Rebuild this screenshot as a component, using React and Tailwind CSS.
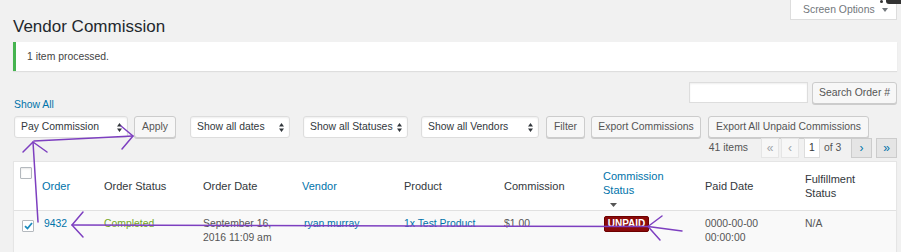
import React from "react";

function SelectArrows() {
    return (
        <svg width="5" height="9" viewBox="0 0 5 9" className="shrink-0">
            <path d="M2.5 0L5 3.5H0z M2.5 9L0 5.5H5z" fill="#32373c" />
        </svg>
    );
}

function Select({label, w}) {
    return (
        <div className={`${w} flex h-[22px] items-center justify-between rounded-[3px] border border-[#ddd] bg-white pl-[6px] pr-[5px] text-[#32373c] shadow-[inset_0_1px_2px_rgba(0,0,0,0.07)]`}>
            <span>{label}</span>
            <SelectArrows />
        </div>
    );
}

function Button({children, w}) {
    return (
        <div className={`${w} flex h-[22px] items-center justify-center rounded-[3px] border border-[#ccc] bg-[#f7f7f7] text-[#555] shadow-[0_1px_0_#ccc]`}>
            {children}
        </div>
    );
}

function PageBtn({children, active}) {
    return (
        <div
            className={
                active
                    ? "flex h-[20px] w-[21px] shrink-0 items-center justify-center border border-[#ccc] bg-[#e5e5e5] text-[12px] text-[#0073aa]"
                    : "flex h-[20px] w-[18px] shrink-0 items-center justify-center border border-[#e5e5e5] bg-[#f7f7f7] text-[12px] text-[#a0a5aa]"
            }
        >
            {children}
        </div>
    );
}

function Annotations() {
    const stroke = "#7d3fc0";
    return (
        <svg className="pointer-events-none absolute inset-0" width="901" height="252" viewBox="0 0 901 252">
            <g fill="none" stroke={stroke} strokeWidth="1.5" strokeLinecap="round" strokeLinejoin="round">
                <path d="M38 222 L33 142" />
                <path d="M23 152 L33 142 L47 152" />
                <path d="M34 141 L133 136" />
                <path d="M121 126 L133 136 L122 149" />
                <path d="M72 225 L648 226.5 L682 231" />
                <path d="M83 212 L72 225 L83 237" />
                <path d="M662 216 L648 226.5 L660 240" />
            </g>
        </svg>
    );
}

export default function App() {
    return (
        <div className="relative h-[252px] w-[901px] overflow-hidden bg-[#f1f1f1] font-['Liberation_Sans',Arial,sans-serif] text-[10.4px] text-[#444]">
            {/* screen options tab */}
            <div className="absolute right-[4px] top-0 flex h-[20px] w-[107px] items-center gap-[7px] border border-t-0 border-[#ddd] bg-white pl-[12px] text-[10.4px] text-[#72777c]">
                <span>Screen Options</span>
                <svg width="6" height="4" viewBox="0 0 6 4">
                    <path d="M0 0H6L3 4z" fill="#72777c" />
                </svg>
            </div>
            <div className="absolute right-0 top-0 h-[4px] w-[15px] rounded-bl-[3px] bg-[#333]" />
            <div className="absolute right-[18px] top-0 h-[3px] w-[3px] rounded-full bg-[#333]" />

            <div className="pl-[13px] pr-[4px] pt-[15px]">
                <h1 className="text-[17px] leading-[23px] text-[#23282d]">Vendor Commission</h1>

                <div className="mt-[4px] flex h-[29px] items-center border-l-[3px] border-[#46b450] bg-white pl-[11px] shadow-[0_1px_1px_rgba(0,0,0,0.08)]">
                    1 item processed.
                </div>

                <div className="mt-[11px] flex items-start justify-between">
                    <div className="mt-[16px] ml-[1px] leading-[13px] text-[#0073aa]">Show All</div>
                    <div className="flex gap-[4px]">
                        <div className="h-[21px] w-[119px] border border-[#ddd] bg-white shadow-[inset_0_1px_2px_rgba(0,0,0,0.07)]" />
                        <Button w="w-[85px]">Search Order #</Button>
                    </div>
                </div>

                <div className="ml-[1px] mt-[5px] flex items-center">
                    <Select label="Pay Commission" w="w-[114px]" />
                    <div className="ml-[6px]"><Button w="w-[42px]">Apply</Button></div>
                    <div className="ml-[14px]"><Select label="Show all dates" w="w-[100px]" /></div>
                    <div className="ml-[13px]"><Select label="Show all Statuses" w="w-[105px]" /></div>
                    <div className="ml-[13px]"><Select label="Show all Vendors" w="w-[118px]" /></div>
                    <div className="ml-[7px]"><Button w="w-[39px]">Filter</Button></div>
                    <div className="ml-[6px]"><Button w="w-[110px]">Export Commissions</Button></div>
                    <div className="ml-[7px]"><Button w="w-[161px]">Export All Unpaid Commissions</Button></div>
                </div>

                <div className="flex h-[20px] items-center justify-end text-[#555]">
                    <span className="mr-[13px]">41 items</span>
                    <PageBtn>«</PageBtn>
                    <div className="ml-[2px]"><PageBtn>‹</PageBtn></div>
                    <div className="ml-[5px] flex h-[20px] w-[16px] shrink-0 items-center justify-center border border-[#ddd] bg-white text-[#32373c]">1</div>
                    <span className="w-[31px] shrink-0 pl-[4px]">of 3</span>
                    <PageBtn active>›</PageBtn>
                    <div className="ml-[4px]"><PageBtn active>»</PageBtn></div>
                </div>

                <div className="mt-[3px] border border-[#e5e5e5] bg-white shadow-[0_1px_1px_rgba(0,0,0,0.04)]">
                    <div className="flex h-[49px] items-center border-b border-[#e1e1e1] text-[11px] leading-[14px] text-[#32373c]">
                        <div className="flex h-full w-[28px] shrink-0 items-start">
                            <div className="ml-[6px] mt-[5px] h-[12px] w-[12px] rounded-[1px] border border-[#b4b9be] bg-white shadow-[inset_0_1px_2px_rgba(0,0,0,0.1)]" />
                        </div>
                        <div className="w-[62px] shrink-0 text-[#0073aa]">Order</div>
                        <div className="w-[99px] shrink-0">Order Status</div>
                        <div className="w-[99px] shrink-0">Order Date</div>
                        <div className="w-[102px] shrink-0 text-[#0073aa]">Vendor</div>
                        <div className="w-[100px] shrink-0">Product</div>
                        <div className="w-[99px] shrink-0">Commission</div>
                        <div className="mt-[3px] w-[102px] shrink-0 text-[#0073aa]">
                            <div>Commission</div>
                            <div>Status</div>
                            <svg width="7" height="4" viewBox="0 0 7 4" className="ml-[7px] mt-[6px]">
                                <path d="M0 0H7L3.5 4z" fill="#555" />
                            </svg>
                        </div>
                        <div className="w-[100px] shrink-0">Paid Date</div>
                        <div className="flex-1">
                            <div>Fulfillment</div>
                            <div>Status</div>
                        </div>
                    </div>

                    <div className="flex h-[60px] items-start bg-[#f9f9f9] pt-[6px] leading-[14px] text-[#555]">
                        <div className="w-[28px] shrink-0">
                            <div className="ml-[8px] mt-[3px] flex h-[12px] w-[12px] items-center justify-center rounded-[1px] border border-[#b4b9be] bg-white">
                                <svg width="9" height="8" viewBox="0 0 9 8">
                                    <path d="M1 4.2 L3.5 6.5 L8 1" fill="none" stroke="#1e8cbe" strokeWidth="1.8" />
                                </svg>
                            </div>
                        </div>
                        <div className="w-[62px] shrink-0 pl-[2px] text-[#0073aa]">9432</div>
                        <div className="w-[99px] shrink-0 text-[#73a724]">Completed</div>
                        <div className="w-[99px] shrink-0">
                            <div>September 16,</div>
                            <div>2016 11:09 am</div>
                        </div>
                        <div className="w-[102px] shrink-0 pl-[2px] text-[#0073aa]">ryan murray</div>
                        <div className="w-[100px] shrink-0 text-[#0073aa]">1x Test Product</div>
                        <div className="w-[99px] shrink-0">$1.00</div>
                        <div className="w-[102px] shrink-0 pl-[1px]">
                            <div className="-mt-[1px] flex h-[16px] w-[45px] items-center justify-center rounded-[2px] border border-[#6d0000] bg-[#8b0a0a] text-[10px] font-bold text-white">
                                UNPAID
                            </div>
                        </div>
                        <div className="w-[100px] shrink-0">
                            <div>0000-00-00</div>
                            <div>00:00:00</div>
                        </div>
                        <div className="flex-1">N/A</div>
                    </div>
                </div>
            </div>

            <Annotations />
        </div>
    );
}
